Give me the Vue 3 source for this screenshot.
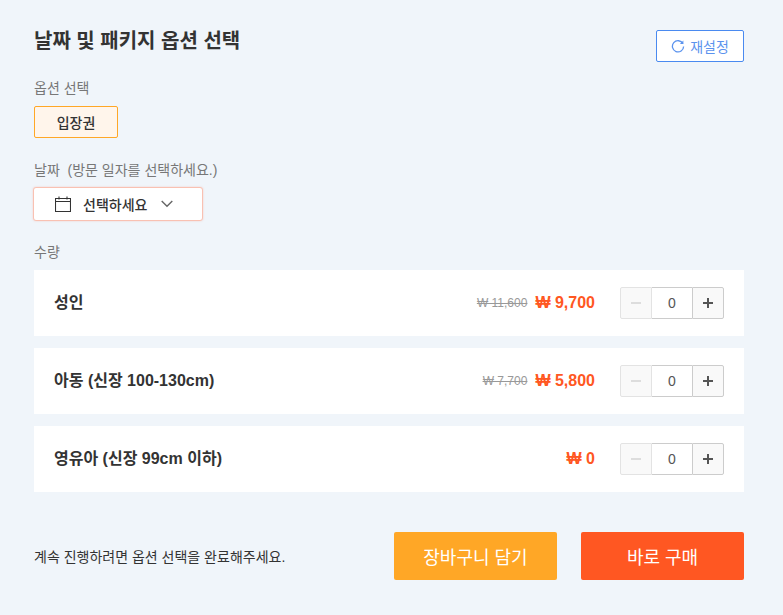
<script setup>
const rows = [
  { name: '성인', old: '₩ 11,600', price: '₩ 9,700' },
  { name: '아동 (신장 100-130cm)', old: '₩ 7,700', price: '₩ 5,800' },
  { name: '영유아 (신장 99cm 이하)', old: '', price: '₩ 0' },
]
</script>

<template>
  <div class="page">
    <header class="head">
      <h1 class="title">날짜 및 패키지 옵션 선택</h1>
      <button class="reset">
        <svg width="14" height="14" viewBox="0 0 14 14" fill="none" stroke="#5b93ee" stroke-width="1.3">
          <path d="M11.9 4.6A5.6 5.6 0 1 0 12.6 7.4" />
          <path d="M12.4 1.4V5H8.9" fill="#5b93ee" stroke="none" />
        </svg>
        재설정
      </button>
    </header>

    <div class="label first">옵션 선택</div>
    <div class="ticket">입장권</div>

    <div class="label date-label">날짜&nbsp;&nbsp;(방문 일자를 선택하세요.)</div>
    <div class="select">
      <svg width="16" height="16" viewBox="0 0 16 16" fill="none" stroke="#333" stroke-width="1.1">
        <path d="M.5 2.5h15v13H.5zM.5 5.5h15M4 .5v3M12 .5v3" />
      </svg>
      <span class="select-text">선택하세요</span>
      <svg width="12" height="8" viewBox="0 0 12 8" fill="none" stroke="#666" stroke-width="1.4">
        <path d="M.7 1l5.3 5.3L11.3 1" />
      </svg>
    </div>

    <div class="label qty-label">수량</div>
    <div class="rows">
      <div v-for="r in rows" :key="r.name" class="row">
        <div class="name">{{ r.name }}</div>
        <div class="prices">
          <s v-if="r.old" class="old">{{ r.old }}</s>
          <span class="price">{{ r.price }}</span>
        </div>
        <div class="stepper">
          <span class="step minus"><i class="bar"></i></span>
          <span class="val">0</span>
          <span class="step plus"><i class="bar"></i><i class="bar v"></i></span>
        </div>
      </div>
    </div>

    <footer class="foot">
      <div class="msg">계속 진행하려면 옵션 선택을 완료해주세요.</div>
      <button class="cta cart">장바구니 담기</button>
      <button class="cta buy">바로 구매</button>
    </footer>
  </div>
</template>

<style>
html, body { margin: 0; background: #f0f5fa; }
</style>

<style scoped>
.page {
  width: 783px;
  height: 615px;
  box-sizing: border-box;
  padding: 30px 39px 0 34px;
  background: #f0f5fa;
  font-family: "Liberation Sans", "Noto Sans CJK KR", sans-serif;
  color: #333;
  overflow: hidden;
}
.head { display: flex; justify-content: space-between; align-items: flex-start; height: 32px; }
.title { margin: 0; font-size: 20px; line-height: 22px; font-weight: 700; color: #333; }
.reset {
  width: 88px; height: 32px; box-sizing: border-box; padding: 0;
  display: flex; align-items: center; justify-content: center; gap: 5px;
  border: 1px solid #4a8af0; border-radius: 2px; background: #fff;
  color: #5b93ee; font: 14px "Liberation Sans", "Noto Sans CJK KR", sans-serif;
}
.label { font-size: 14px; line-height: 20px; color: #777; }
.first { margin-top: 16px; }
.ticket {
  margin-top: 8px; width: 84px; height: 32px; box-sizing: border-box;
  display: flex; align-items: center; justify-content: center;
  border: 1px solid #ffa726; border-radius: 2px; background: #fff5eb;
  font-size: 14px; font-weight: 500; color: #333;
}
.date-label { margin-top: 22px; }
.select {
  margin: 7px 0 0 -1px; width: 170px; height: 34px; box-sizing: border-box;
  display: flex; align-items: center; padding: 0 21px;
  border: 1px solid #f9c1b2; border-radius: 3px; background: #fff;
  box-shadow: 0 0 2px rgba(255, 87, 34, .25);
}
.select-text { margin: 0 14px 0 12px; font-size: 14px; font-weight: 500; color: #333; white-space: nowrap; }
.qty-label { margin-top: 21px; }
.rows { margin-top: 8px; display: flex; flex-direction: column; gap: 12px; }
.row {
  height: 66px; box-sizing: border-box; background: #fff;
  display: flex; align-items: center; padding: 0 20px;
}
.name { flex: 1; font-size: 16px; font-weight: 700; color: #333; margin-top: -4px; }
.prices { display: flex; align-items: center; gap: 8px; }
.old { font-size: 12px; color: #999; }
.price { font-size: 16px; font-weight: 700; color: #ff5722; }
.stepper { margin-left: 25px; display: flex; width: 104px; height: 32px; font-size: 14px; }
.step {
  position: relative; width: 32px; box-sizing: border-box;
  border: 1px solid #ccc; background: #f9f9f9;
}
.minus { border-color: #e3e3e3; border-radius: 2px 0 0 2px; --c: #ddd; }
.plus { border-radius: 0 2px 2px 0; --c: #555; }
.bar {
  position: absolute; left: 50%; top: 50%; width: 10px; height: 2px;
  margin: -1px 0 0 -5px; background: var(--c);
}
.bar.v { width: 2px; height: 10px; margin: -5px 0 0 -1px; }
.val {
  width: 40px; box-sizing: border-box; display: flex; align-items: center; justify-content: center;
  border-top: 1px solid #ccc; border-bottom: 1px solid #ccc; background: #fff; color: #555;
}
.foot { margin-top: 40px; display: flex; align-items: center; gap: 24px; }
.msg { flex: 1; font-size: 14px; color: #333; }
.cta {
  width: 163px; height: 48px; padding: 0; border: 0; border-radius: 2px; color: #fff;
  font: 18px "Liberation Sans", "Noto Sans CJK KR", sans-serif;
}
.cart { background: #ffa726; }
.buy { background: #ff5722; }
</style>
